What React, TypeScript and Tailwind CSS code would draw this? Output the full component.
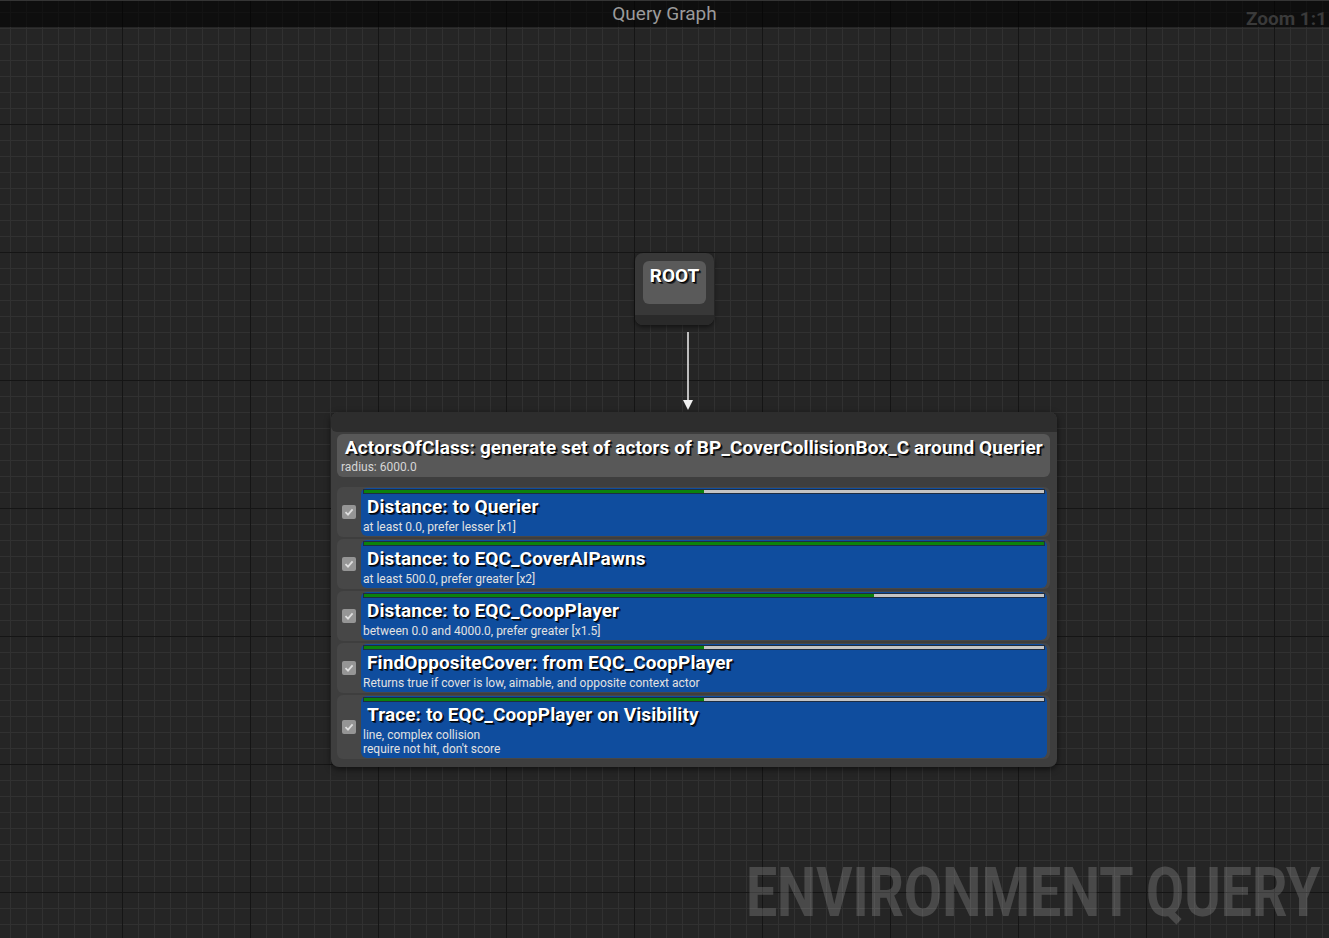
import React from 'react';

// Tests shown inside the generator node
const tests = [
    { title: 'Distance: to Querier', lines: ['at least 0.0, prefer lesser [x1]'], score: 50 },
    { title: 'Distance: to EQC_CoverAIPawns', lines: ['at least 500.0, prefer greater [x2]'], score: 100 },
    { title: 'Distance: to EQC_CoopPlayer', lines: ['between 0.0 and 4000.0, prefer greater [x1.5]'], score: 75 },
    { title: 'FindOppositeCover: from EQC_CoopPlayer', lines: ['Returns true if cover is low, aimable, and opposite context actor'], score: 50 },
    { title: 'Trace: to EQC_CoopPlayer on Visibility', lines: ['line, complex collision', "require not hit, don't score"], score: 50 },
];

function CheckBox() {
    return (
        <div className="w-[14px] h-[14px] rounded-[2px] bg-[#959595] flex items-center justify-center shrink-0">
            <svg width="10" height="10" viewBox="0 0 10 10">
                <path d="M1.5 5.2 L4 7.6 L8.6 2.4" stroke="#dedede" strokeWidth="1.8" fill="none" />
            </svg>
        </div>
    );
}

function TestRow({ title, lines, score }: { title: string; lines: string[]; score: number }) {
    return (
        <div className="flex items-center bg-[#474747] rounded-md pl-[5px] pr-[3px] py-[1px]">
            <CheckBox />
            <div className="ml-[5px] flex-1 bg-[#0f4d9e] rounded-md pt-[1px] pb-[2px]">
                <div className="mx-[2px] h-[5px] bg-[#c4c4c4] border border-[#1d2d44] flex">
                    <div className="h-full bg-[#0c820c]" style={{ width: `${score}%` }} />
                </div>
                <div className="mt-[3px] ml-[6px] text-[19px] leading-[20px] font-bold tracking-[0.1px] text-white [text-shadow:1px_1px_0_#000,2px_2px_0_rgba(0,0,0,0.6)]">
                    {title}
                </div>
                <div className="mt-[3px] ml-[2px] text-[12px] leading-[14px] text-[#e2e2e2]">
                    {lines.map(l => (
                        <div key={l}>{l}</div>
                    ))}
                </div>
            </div>
        </div>
    );
}

export default function App() {
    return (
        <div
            className="relative w-full h-[938px] overflow-hidden font-['Roboto',sans-serif] bg-[#252525] bg-[image:linear-gradient(to_right,#151515_1px,transparent_1px),linear-gradient(to_bottom,#151515_1px,transparent_1px),linear-gradient(to_right,#313131_1px,transparent_1px),linear-gradient(to_bottom,#313131_1px,transparent_1px)] bg-[size:128px_128px,128px_128px,16px_16px,16px_16px] bg-[position:122px_0,0_124px,10px_0,0_12px]"
        >
            {/* Barra de título */}
            <div className="absolute top-0 left-0 right-0 h-[27px] bg-black/60 border-t border-[#353535] flex items-center justify-center">
                <span className="text-[19px] text-[#9b9b9b]">Query Graph</span>
            </div>
            <div className="absolute top-[5px] right-[2px] text-[19px] font-bold text-[#3a3a3a]">Zoom 1:1</div>

            {/* Nodo ROOT */}
            <div className="absolute left-[635px] top-[253px] w-[79px] h-[72px] bg-[#383838] rounded-lg flex flex-col shadow-[0_2px_4px_rgba(0,0,0,0.5)]">
                <div className="mt-[8px] mx-[8px] h-[43px] bg-[#5a5a5a] rounded-md flex justify-center pt-[3px]">
                    <span className="text-[19px] leading-[24px] font-bold text-white [text-shadow:1px_1px_0_#000,2px_2px_0_rgba(0,0,0,0.6)]">ROOT</span>
                </div>
                <div className="flex-1" />
                <div className="h-[10px] bg-[#2a2a2a] rounded-b-lg" />
            </div>

            {/* Flecha */}
            <svg className="absolute left-[682px] top-[332px]" width="12" height="80" viewBox="0 0 12 80">
                <line x1="6" y1="0" x2="6" y2="70" stroke="#f0f0f0" strokeWidth="1.5" />
                <polygon points="1,68 11,68 6,78" fill="#f0f0f0" />
            </svg>

            {/* Nodo generador */}
            <div className="absolute left-[331px] top-[412px] w-[726px] bg-[#3e3e3e] rounded-lg shadow-[0_2px_6px_rgba(0,0,0,0.6)] pb-[8px]">
                <div className="h-[20px] bg-[#2d2d2d] rounded-t-lg rounded-bl-md" />
                <div className="mt-[2px] ml-[6px] mr-[7px] bg-[#585858] rounded-md pt-[3px] pb-[3px]">
                    <div className="pl-[8px] text-[19px] leading-[21px] font-bold tracking-[0.1px] text-white [text-shadow:1px_1px_0_#000,2px_2px_0_rgba(0,0,0,0.6)] whitespace-nowrap">
                        ActorsOfClass: generate set of actors of BP_CoverCollisionBox_C around Querier
                    </div>
                    <div className="mt-[2px] pl-[4px] text-[12px] leading-[14px] text-[#d6d6d6]">radius: 6000.0</div>
                </div>
                <div className="mt-[10px] ml-[6px] mr-[7px] flex flex-col gap-[2px]">
                    {tests.map(t => (
                        <TestRow key={t.title} {...t} />
                    ))}
                </div>
            </div>

            {/* Marca de agua */}
            <div className="absolute right-[9px] top-[853px] origin-right scale-x-[0.803] text-[69px] leading-[80px] font-bold text-white/[0.17] whitespace-nowrap">
                ENVIRONMENT QUERY
            </div>
        </div>
    );
}
